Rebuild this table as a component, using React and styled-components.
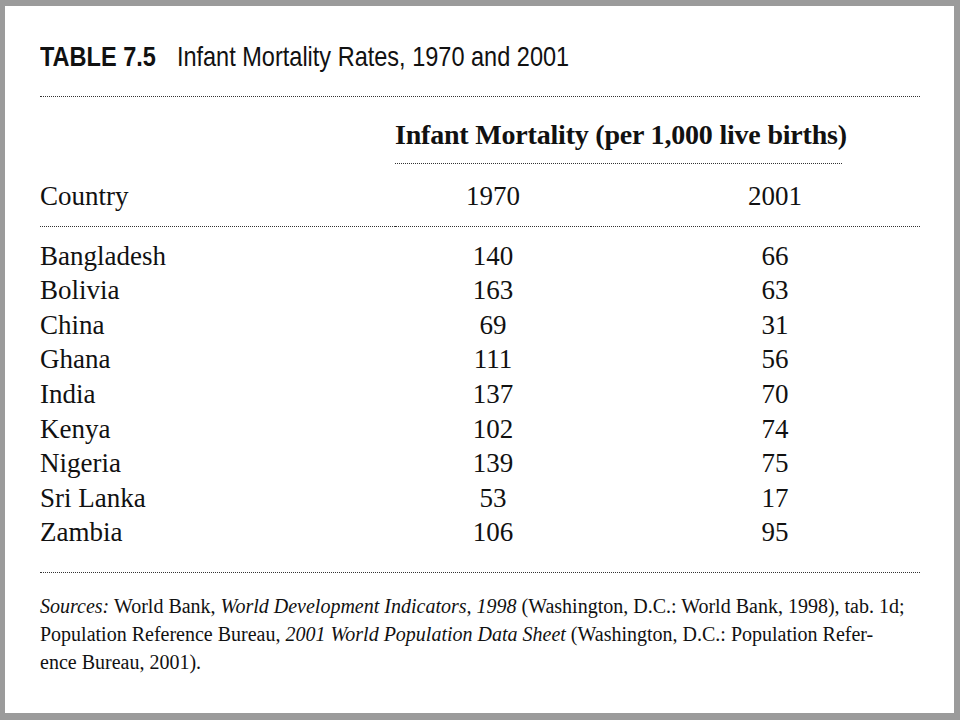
import styled, { createGlobalStyle } from "styled-components";

const GlobalStyle = createGlobalStyle`
  html, body {
    margin: 0;
    padding: 0;
    background: #9b9b9b;
  }
`;

const Frame = styled.div`
  width: 960px;
  height: 720px;
  box-sizing: border-box;
  padding: 6px 6px 7px 5px;
`;

const Sheet = styled.div`
  height: 100%;
  background: #fff;
  box-sizing: border-box;
  padding: 0 34px 0 35px;
  color: #111;
  font-family: "Liberation Serif", "Times New Roman", serif;
`;

const Title = styled.h1`
  margin: 0;
  padding-top: 35px;
  height: 90px;
  box-sizing: border-box;
  font-family: "Liberation Sans", Arial, sans-serif;
  font-size: 28px;
  line-height: 32px;
  font-weight: normal;
  white-space: nowrap;
  transform: scaleX(0.84);
  transform-origin: left top;
`;

const TableNo = styled.span`
  font-weight: bold;
  margin-right: 25px;
`;

const Rule = styled.div`
  border-top: 1px dotted #333;
`;

const Table = styled.div`
  display: grid;
  grid-template-columns: 355px 196px 1fr;
`;

const GroupHead = styled.div`
  grid-column: 2 / 4;
  padding-top: 21px;
`;

const GroupTitle = styled.div`
  font-weight: bold;
  font-size: 28px;
  letter-spacing: -0.2px;
  line-height: 34px;
  white-space: nowrap;
  padding-bottom: 11px;
  border-bottom: 1px dotted #333;
  width: 447px;
`;

const Cell = styled.div`
  font-size: 27px;
  line-height: 34.6px;
  white-space: nowrap;
  text-align: ${(p) => (p.$num ? "center" : "left")};
  padding-left: ${(p) => (p.$last ? "39px" : "0")};
`;

const HeadRow = styled.div`
  display: contents;
  & > div {
    padding-top: 15px;
    padding-bottom: 12px;
    border-bottom: 1px dotted #333;
  }
`;

const Body = styled.div`
  display: contents;
  & > div:nth-child(-n + 3) {
    padding-top: 12px;
  }
`;

const BodyEnd = styled.div`
  grid-column: 1 / 4;
  height: 22px;
  border-bottom: 1px dotted #333;
`;

const Sources = styled.p`
  margin: 0;
  padding-top: 19px;
  font-size: 20px;
  line-height: 28px;
  white-space: nowrap;
`;

const rows = [
  ["Bangladesh", 140, 66],
  ["Bolivia", 163, 63],
  ["China", 69, 31],
  ["Ghana", 111, 56],
  ["India", 137, 70],
  ["Kenya", 102, 74],
  ["Nigeria", 139, 75],
  ["Sri Lanka", 53, 17],
  ["Zambia", 106, 95],
];

export default function App() {
  return (
    <>
      <GlobalStyle />
      <Frame>
        <Sheet>
          <Title>
            <TableNo>TABLE 7.5</TableNo>Infant Mortality Rates, 1970 and 2001
          </Title>
          <Rule />
          <Table>
            <div />
            <GroupHead>
              <GroupTitle>Infant Mortality (per 1,000 live births)</GroupTitle>
            </GroupHead>
            <HeadRow>
              <Cell>Country</Cell>
              <Cell $num>1970</Cell>
              <Cell $num $last>2001</Cell>
            </HeadRow>
            <Body>
              {rows.map(([name, a, b]) => (
                <Row key={name} name={name} a={a} b={b} />
              ))}
            </Body>
            <BodyEnd />
          </Table>
          <Sources>
            <i>Sources:</i> World Bank, <i>World Development Indicators, 1998</i> (Washington, D.C.: World Bank, 1998), tab. 1d;
            <br />
            Population Reference Bureau, <i>2001 World Population Data Sheet</i> (Washington, D.C.: Population Refer-
            <br />
            ence Bureau, 2001).
          </Sources>
        </Sheet>
      </Frame>
    </>
  );
}

function Row({ name, a, b }) {
  return (
    <>
      <Cell>{name}</Cell>
      <Cell $num>{a}</Cell>
      <Cell $num $last>{b}</Cell>
    </>
  );
}
